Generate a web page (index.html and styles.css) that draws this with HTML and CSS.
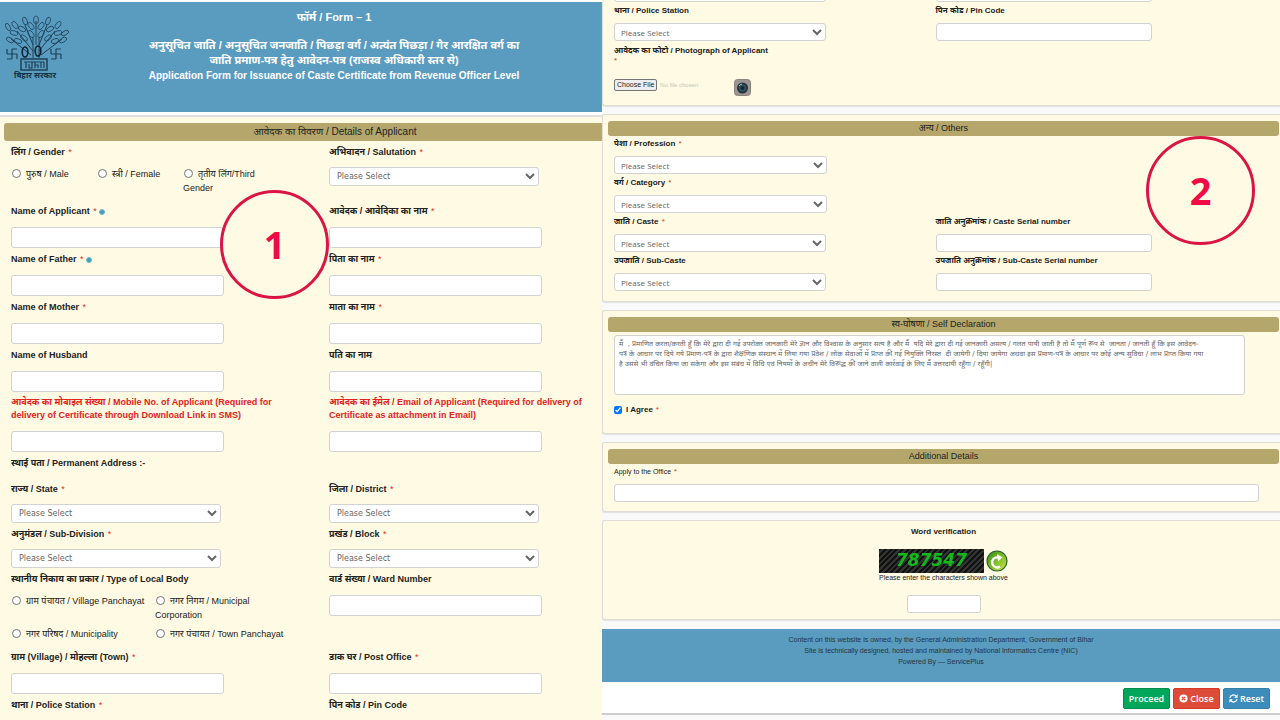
FILE: index.html
```html
<!DOCTYPE html>
<html lang="hi">

<head>
    <meta charset="UTF-8">
    <meta name="viewport" content="width=device-width, initial-scale=1.0">
    <title>Caste Certificate Application</title>
    <link rel="stylesheet" href="styles.css">
</head>

<body>
    <div class="page">

        <!-- Part 1 -->
        <div class="part part-one">
            <header class="form-header">
                <div class="emblem">
                    <svg viewBox="0 0 64 56" width="64" height="56" fill="none" stroke="#1d4258" stroke-width="1">
                        <path d="M28 43V22M34 43V22M31 30V6M28 36L12 16M34 36L50 16M28 30L20 10M34 30L42 10M26 40L6 24M36 40L57 24"/>
                        <g stroke-width="0.8">
                            <ellipse cx="31" cy="5" rx="2.5" ry="4"/>
                            <ellipse cx="26" cy="11" rx="2.2" ry="4" transform="rotate(-35 26 11)"/>
                            <ellipse cx="36" cy="11" rx="2.2" ry="4" transform="rotate(35 36 11)"/>
                            <ellipse cx="26" cy="19" rx="2.2" ry="4" transform="rotate(-35 26 19)"/>
                            <ellipse cx="36" cy="19" rx="2.2" ry="4" transform="rotate(35 36 19)"/>
                            <ellipse cx="20" cy="6" rx="2.2" ry="4" transform="rotate(-20 20 6)"/>
                            <ellipse cx="43" cy="6" rx="2.2" ry="4" transform="rotate(20 43 6)"/>
                            <ellipse cx="17" cy="14" rx="2.2" ry="4" transform="rotate(-60 17 14)"/>
                            <ellipse cx="45" cy="14" rx="2.2" ry="4" transform="rotate(60 45 14)"/>
                            <ellipse cx="10" cy="10" rx="2.2" ry="4" transform="rotate(-35 10 10)"/>
                            <ellipse cx="53" cy="10" rx="2.2" ry="4" transform="rotate(35 53 10)"/>
                            <ellipse cx="9" cy="18" rx="2.2" ry="4" transform="rotate(-75 9 18)"/>
                            <ellipse cx="53" cy="18" rx="2.2" ry="4" transform="rotate(75 53 18)"/>
                            <ellipse cx="3" cy="12" rx="2" ry="4" transform="rotate(-30 3 12)"/>
                            <ellipse cx="60" cy="18" rx="2" ry="4" transform="rotate(60 60 18)"/>
                            <ellipse cx="5" cy="25" rx="2.2" ry="4" transform="rotate(-60 5 25)"/>
                            <ellipse cx="58" cy="25" rx="2.2" ry="4" transform="rotate(60 58 25)"/>
                            <ellipse cx="13" cy="26" rx="2.2" ry="4" transform="rotate(-70 13 26)"/>
                            <ellipse cx="50" cy="26" rx="2.2" ry="4" transform="rotate(70 50 26)"/>
                            <ellipse cx="19" cy="23" rx="2.2" ry="4" transform="rotate(-50 19 23)"/>
                            <ellipse cx="43" cy="23" rx="2.2" ry="4" transform="rotate(50 43 23)"/>
                        </g>
                        <g stroke="#0c2230" stroke-width="1.6">
                            <ellipse cx="20" cy="37" rx="2.8" ry="5"/>
                            <ellipse cx="33" cy="36" rx="2.8" ry="5"/>
                        </g>
                        <path d="M7 34V44M2 39H12M7 34H12M12 39V44M7 44H2M2 39V34M51 34V44M46 39H56M51 34H56M56 39V44M51 44H46M46 39V34" stroke-width="1.2"/>
                        <rect x="16" y="44" width="26" height="11" stroke-width="1.5"/>
                        <path d="M19 47H39M21 47V53M24 49V53H27V47M30 47V53M30 50H33V53M36 47V53M39 47V53" stroke-width="1.2"/>
                    </svg>
                    <span>बिहार सरकार</span>
                </div>
                <div class="form-title">
                    <p class="form-number">फॉर्म / Form – 1</p>
                    <p>अनुसूचित जाति / अनुसूचित जनजाति / पिछड़ा वर्ग / अत्यंत पिछड़ा / गैर आरक्षित वर्ग का</p>
                    <p>जाति प्रमाण-पत्र हेतु आवेदन-पत्र (राजस्व अधिकारी स्तर से)</p>
                    <p class="english">Application Form for Issuance of Caste Certificate from Revenue Officer Level</p>
                </div>
            </header>

            <section class="applicant">
                <h2 class="bar">आवेदक का विवरण / Details of Applicant</h2>
                <div class="fields">
                    <div class="field">
                        <span class="label">लिंग / Gender <i>*</i></span>
                        <div class="radios radios-three">
                            <label><input type="radio" name="gender">पुरुष / Male</label>
                            <label><input type="radio" name="gender">स्त्री / Female</label>
                            <label><input type="radio" name="gender">तृतीय लिंग/Third Gender</label>
                        </div>
                    </div>
                    <div class="field">
                        <label for="salutation">अभिवादन / Salutation <i>*</i></label>
                        <select id="salutation"><option>Please Select</option></select>
                    </div>
                    <div class="field">
                        <label for="name">Name of Applicant <i>*</i><b class="help"></b></label>
                        <input type="text" id="name">
                    </div>
                    <div class="field">
                        <label for="name-hi">आवेदक / आवेदिका का नाम <i>*</i></label>
                        <input type="text" id="name-hi">
                    </div>
                    <div class="field">
                        <label for="father">Name of Father <i>*</i><b class="help"></b></label>
                        <input type="text" id="father">
                    </div>
                    <div class="field">
                        <label for="father-hi">पिता का नाम <i>*</i></label>
                        <input type="text" id="father-hi">
                    </div>
                    <div class="field">
                        <label for="mother">Name of Mother <i>*</i></label>
                        <input type="text" id="mother">
                    </div>
                    <div class="field">
                        <label for="mother-hi">माता का नाम <i>*</i></label>
                        <input type="text" id="mother-hi">
                    </div>
                    <div class="field">
                        <label for="husband">Name of Husband</label>
                        <input type="text" id="husband">
                    </div>
                    <div class="field">
                        <label for="husband-hi">पति का नाम</label>
                        <input type="text" id="husband-hi">
                    </div>
                    <div class="field red">
                        <label for="mobile">आवेदक का मोबाइल संख्या / Mobile No. of Applicant (Required for delivery of Certificate through Download Link in SMS)</label>
                        <input type="text" id="mobile">
                    </div>
                    <div class="field red">
                        <label for="email">आवेदक का ईमेल / Email of Applicant (Required for delivery of Certificate as attachment in Email)</label>
                        <input type="text" id="email">
                    </div>
                </div>

                <p class="address-title">स्थाई पता / Permanent Address :-</p>
                <div class="fields">
                    <div class="field">
                        <label for="state">राज्य / State <i>*</i></label>
                        <select id="state"><option>Please Select</option></select>
                    </div>
                    <div class="field">
                        <label for="district">जिला / District <i>*</i></label>
                        <select id="district"><option>Please Select</option></select>
                    </div>
                    <div class="field">
                        <label for="subdivision">अनुमंडल / Sub-Division <i>*</i></label>
                        <select id="subdivision"><option>Please Select</option></select>
                    </div>
                    <div class="field">
                        <label for="block">प्रखंड / Block <i>*</i></label>
                        <select id="block"><option>Please Select</option></select>
                    </div>
                    <div class="field">
                        <span class="label">स्थानीय निकाय का प्रकार / Type of Local Body</span>
                        <div class="radios radios-two">
                            <label><input type="radio" name="body">ग्राम पंचायत / Village Panchayat</label>
                            <label><input type="radio" name="body">नगर निगम / Municipal Corporation</label>
                            <label><input type="radio" name="body">नगर परिषद / Municipality</label>
                            <label><input type="radio" name="body">नगर पंचायत / Town Panchayat</label>
                        </div>
                    </div>
                    <div class="field">
                        <label for="ward">वार्ड संख्या / Ward Number</label>
                        <input type="text" id="ward">
                    </div>
                    <div class="field">
                        <label for="village">ग्राम (Village) / मोहल्ला (Town) <i>*</i></label>
                        <input type="text" id="village">
                    </div>
                    <div class="field">
                        <label for="post">डाक घर / Post Office <i>*</i></label>
                        <input type="text" id="post">
                    </div>
                    <div class="field">
                        <span class="label">थाना / Police Station <i>*</i></span>
                    </div>
                    <div class="field">
                        <span class="label">पिन कोड / Pin Code</span>
                    </div>
                </div>
            </section>
            <div class="step step-one">1</div>
        </div>

        <!-- Part 2 -->
        <div class="part part-two">
            <section class="card card-first">
                <div class="fields">
                    <div class="field">
                        <select aria-label="Village"><option></option></select>
                    </div>
                    <div class="field">
                        <input type="text" aria-label="Post Office">
                    </div>
                    <div class="field">
                        <label for="police">थाना / Police Station</label>
                        <select id="police"><option>Please Select</option></select>
                    </div>
                    <div class="field">
                        <label for="pin">पिन कोड / Pin Code</label>
                        <input type="text" id="pin">
                    </div>
                </div>
                <div class="photo">
                    <span class="label">आवेदक का फोटो / Photograph of Applicant</span>
                    <i>*</i>
                    <div class="file-row">
                        <button type="button" class="choose">Choose File</button>
                        <span class="no-file">No file chosen</span>
                        <button type="button" class="camera" aria-label="Camera">
                            <svg viewBox="0 0 17 17" width="17" height="17">
                                <rect x="0.5" y="0.5" width="16" height="16" rx="3" fill="#9b9690" stroke="#8a857f"/>
                                <circle cx="8.5" cy="9" r="5.5" fill="#25333d"/>
                                <circle cx="8.5" cy="9" r="3.5" fill="#34596a"/>
                                <circle cx="8.5" cy="9" r="2" fill="#142431"/>
                                <path d="M5 7A4 4 0 0 1 8 5" stroke="#a5bdc3" fill="none"/>
                            </svg>
                        </button>
                    </div>
                </div>
            </section>

            <section class="card">
                <h2 class="bar">अन्य / Others</h2>
                <div class="fields">
                    <div class="field whole">
                        <label for="profession">पेशा / Profession <i>*</i></label>
                        <select id="profession"><option>Please Select</option></select>
                    </div>
                    <div class="field whole">
                        <label for="category">वर्ग / Category <i>*</i></label>
                        <select id="category"><option>Please Select</option></select>
                    </div>
                    <div class="field">
                        <label for="caste">जाति / Caste <i>*</i></label>
                        <select id="caste"><option>Please Select</option></select>
                    </div>
                    <div class="field">
                        <label for="caste-no">जाति अनुक्रमांक / Caste Serial number</label>
                        <input type="text" id="caste-no">
                    </div>
                    <div class="field">
                        <label for="subcaste">उपजाति / Sub-Caste</label>
                        <select id="subcaste"><option>Please Select</option></select>
                    </div>
                    <div class="field">
                        <label for="subcaste-no">उपजाति अनुक्रमांक / Sub-Caste Serial number</label>
                        <input type="text" id="subcaste-no">
                    </div>
                </div>
            </section>

            <section class="card declaration">
                <h2 class="bar">स्व-घोषणा / Self Declaration</h2>
                <textarea aria-label="Self Declaration">मैं  , प्रमाणित करता/करती हूँ कि मेरे द्वारा दी गई उपरोक्त जानकारी मेरे ज्ञान और विश्वास के अनुसार सत्य है और मैं  यदि मेरे द्वारा दी गई जानकारी असत्य / गलत पायी जाती है तो मैं पूर्ण रूप से  जानता / जानती हूँ कि इस आवेदन-
पत्र के आधार पर दिये गये प्रमाण-पत्र के द्वारा शैक्षणिक संस्थान में लिया गया प्रवेश / लोक सेवाओं में प्राप्त की गई नियुक्ति निरस्त  दी जायेगी / दिया जायेगा अथवा इस प्रमाण-पत्र के आधार पर कोई अन्य सुविधा / लाभ प्राप्त किया गया
है उससे भी वंचित किया जा सकेगा और इस संबंध में विधि एवं नियमों के अधीन मेरे विरूद्ध की जाने वाली कार्रवाई के लिए मैं उत्तरदायी रहूँगा / रहूँगी|</textarea>
                <label class="agree"><input type="checkbox" checked>I Agree <i>*</i></label>
            </section>

            <section class="card additional">
                <h2 class="bar">Additional Details</h2>
                <div class="field">
                    <label for="office">Apply to the Office <i>*</i></label>
                    <input type="text" id="office">
                </div>
            </section>

            <section class="card verification">
                <h3>Word verification</h3>
                <div class="captcha-row">
                    <span class="captcha">787547</span>
                    <button type="button" class="refresh" aria-label="Refresh">
                        <svg viewBox="0 0 22 22" width="22" height="22">
                            <defs>
                                <linearGradient id="lime" x1="0" y1="0" x2="1" y2="1">
                                    <stop offset="0" stop-color="#2f8a1c"/>
                                    <stop offset="0.5" stop-color="#7fbd28"/>
                                    <stop offset="1" stop-color="#d3e84a"/>
                                </linearGradient>
                            </defs>
                            <circle cx="11" cy="11" r="10" fill="url(#lime)" stroke="#2b5f2b" stroke-width="1.2"/>
                            <path d="M14 16.5A5 5 0 1 1 12 7.5" fill="none" stroke="#fff" stroke-width="2.4"/>
                            <path d="M11 4L16.5 7.5L12 11.5Z" fill="#fff"/>
                        </svg>
                    </button>
                </div>
                <label for="captcha">Please enter the characters shown above</label>
                <input type="text" id="captcha">
            </section>

            <footer class="footer">
                <p>Content on this website is owned, by the General Administration Department, Government of Bihar</p>
                <p>Site is technically designed, hosted and maintained by National Informatics Centre (NIC)</p>
                <p>Powered By — ServicePlus</p>
            </footer>

            <div class="actions">
                <button type="button" class="btn green">Proceed</button>
                <button type="button" class="btn orange">
                    <svg viewBox="0 0 10 10" width="9" height="9">
                        <circle cx="5" cy="5" r="4.5" fill="#fff"/>
                        <path d="M3.2 3.2L6.8 6.8M6.8 3.2L3.2 6.8" stroke="#dd4b39" stroke-width="1.5"/>
                    </svg>Close</button>
                <button type="button" class="btn blue">
                    <svg viewBox="0 0 10 10" width="9" height="9" fill="none" stroke="#fff" stroke-width="1.4">
                        <path d="M1 4.2A4 4 0 0 1 8 2.6M9 5.8A4 4 0 0 1 2 7.4"/>
                        <path d="M9.6 0.4V4.2H5.8ZM0.4 9.6V5.8H4.2Z" fill="#fff" stroke="none"/>
                    </svg>Reset</button>
            </div>
            <div class="step step-two">2</div>
        </div>
    </div>
</body>

</html>
```
FILE: styles.css
```css
* {
    box-sizing: border-box;
}

body {
    font-family: "Liberation Sans", "Noto Sans", "Noto Sans Devanagari", sans-serif;
    background-color: #fff;
    color: #222;
    margin: 0;
}

h2,
h3,
p {
    margin: 0;
}

i {
    color: #e0321c;
    font-style: normal;
}

.page {
    display: grid;
    grid-template-columns: 602fr 678fr;
    height: 100vh;
    overflow: hidden;
}

.part {
    position: relative;
    min-width: 0;
}

.part-one {
    font-size: 9px;
    line-height: 14px;
    padding-top: 2px;
}

.part-two {
    font-size: 8px;
    line-height: 12px;
    background-color: #f9f9fa;
}

/* Header */
.form-header {
    display: flex;
    height: 110px;
    padding: 8px 2px;
    background-color: #5a9bc0;
}

.emblem {
    display: flex;
    flex-direction: column;
    align-items: center;
    width: 66px;
    padding-top: 5px;
    font-size: 8px;
    line-height: 9px;
    font-weight: bold;
    color: #123247;
}

.emblem svg {
    flex-shrink: 0;
    margin-left: 4px;
}

.form-title {
    flex: 1;
    color: #fff;
    font-size: 11px;
    line-height: 15px;
    font-weight: bold;
    text-align: center;
    white-space: nowrap;
}

.form-title .form-number {
    margin-bottom: 13px;
}

.form-title .english {
    font-size: 10px;
}

/* Sections */
.applicant {
    margin-top: 3px;
    padding: 6px 0 0 4px;
    border-top: 2px solid #e2e3e1;
    background-color: #fffae3;
    height: 100%;
}

.bar {
    background-color: #b5a76c;
    border-radius: 3px;
    color: #222;
    font-weight: normal;
    text-align: center;
}

.part-one .bar {
    border-radius: 3px 0 0 3px;
    font-size: 10px;
    line-height: 18px;
    padding-left: 64px;
    margin-bottom: 4px;
}

.part-two .bar {
    font-size: 9px;
    line-height: 15px;
    margin-bottom: 2px;
}

.fields {
    display: grid;
}

.part-one .fields {
    grid-template-columns: 318fr 273fr;
    row-gap: 4px;
    padding-left: 7px;
}

.part-two .fields {
    grid-template-columns: 322fr 344fr;
    row-gap: 4px;
    padding-left: 6px;
}

.field > label,
.label,
.address-title {
    display: block;
    font-weight: bold;
}

.red label {
    color: #e32219;
    line-height: 13px;
    max-width: 275px;
}

.field i {
    margin-left: 1px;
    font-weight: normal;
}

.address-title {
    margin: 4px 0 12px 7px;
}

.help {
    display: inline-block;
    width: 6px;
    height: 6px;
    margin-left: 2px;
    border-radius: 50%;
    background-color: #3f9fc0;
    border: 1px solid #7cb6c6;
    vertical-align: -1px;
}

input[type="text"],
select,
textarea {
    display: block;
    background-color: #fff;
    border: 1px solid #d2d2d0;
    border-radius: 3px;
    margin: 0;
}

select {
    color: #666;
    font-family: "DejaVu Sans", sans-serif;
    font-size: 8px;
    padding: 0 3px;
}

.part-two select {
    font-family: "Open Sans", sans-serif;
    padding: 0 2px;
}

.part-one .field > input {
    margin-top: 9px;
    height: 21px;
    width: 67%;
}

.part-one .field:nth-child(even) > input {
    width: 78%;
}

.part-one select {
    margin-top: 8px;
    height: 19px;
    width: 66%;
}

.part-one .field:nth-child(even) > select {
    width: 77%;
}

.part-two .field > input,
.part-two select {
    margin-top: 6px;
    margin-bottom: -1px;
    height: 18px;
    width: 66%;
}

.part-two .fields .field > input {
    width: 63%;
}

.part-two .whole {
    grid-column: 1 / -1;
}

.part-two .whole > select {
    width: 32%;
}

/* Radio buttons */
.radios {
    display: grid;
    row-gap: 5px;
    margin-top: 8px;
    padding-bottom: 5px;
}

.radios-three {
    grid-template-columns: 86px 86px 80px;
}

.radios-two {
    grid-template-columns: 144px 140px;
}

.radios input {
    width: 9px;
    height: 9px;
    margin: 0 5px 0 1px;
    vertical-align: -1px;
}

/* Cards on the right side */
.card {
    background-color: #fffae3;
    border: 1px solid #dddcd6;
    border-right: none;
    border-radius: 3px 0 0 3px;
    padding: 6px 1px 11px 5px;
    margin-bottom: 8px;
    box-shadow: 0 1px 1px #e2e2e2;
}

.card-first {
    border-top: none;
    padding-top: 5px;
    padding-bottom: 9px;
}

/* the row above is scrolled out of view */
.card-first .fields {
    margin-top: -27px;
}

.photo {
    padding: 5px 0 0 6px;
}

.photo > i {
    display: block;
    line-height: 8px;
}

.file-row {
    display: flex;
    align-items: flex-start;
    padding-top: 14px;
}

.choose {
    font-size: 7px;
    line-height: 10px;
    padding: 0 2px;
    border: 1px solid #767676;
    border-radius: 2px;
    background-color: #efefef;
    color: #222;
}

.no-file {
    color: #c8c5b5;
    font-size: 6px;
    margin-left: 3px;
}

.camera {
    border: none;
    padding: 0;
    background: none;
    margin-left: 36px;
    height: 17px;
}

.declaration textarea {
    width: 94%;
    height: 60px;
    margin: 3px 0 0 6px;
    padding: 3px 4px;
    resize: none;
    overflow: hidden;
    white-space: pre;
    color: #666;
    font-family: "DejaVu Sans", "Noto Sans", "Noto Sans Devanagari", sans-serif;
    font-size: 7px;
    line-height: 10px;
}

.agree {
    display: flex;
    align-items: center;
    padding: 9px 0 6px 6px;
    font-weight: bold;
}

.agree input {
    width: 8px;
    height: 8px;
    margin: 0 4px 0 0;
}

.agree i {
    margin-left: 3px;
    font-weight: normal;
}

.additional {
    padding-bottom: 10px;
}

.additional .field {
    padding-left: 6px;
}

.additional .field > label {
    font-size: 7px;
    font-weight: normal;
}

.part-two .additional .field > input {
    width: 97%;
}

.verification {
    display: flex;
    flex-direction: column;
    align-items: center;
    padding-top: 5px;
    padding-bottom: 6px;
    margin-bottom: 9px;
}

.verification h3 {
    font-size: 8px;
    line-height: 12px;
    color: #222;
}

.captcha-row {
    display: flex;
    gap: 2px;
    margin-top: 11px;
}

.captcha {
    width: 105px;
    height: 24px;
    background: repeating-linear-gradient(135deg, #111 0, #111 2px, #333 2px, #333 4px);
    color: #12b91d;
    font-family: "DejaVu Sans", sans-serif;
    font-size: 17px;
    line-height: 22px;
    font-style: italic;
    font-weight: bold;
    text-align: center;
}

.refresh {
    border: none;
    background: none;
    padding: 0;
    margin-top: 1px;
    height: 22px;
}

.verification label {
    font-size: 7px;
    line-height: 9px;
}

.verification input[type="text"] {
    width: 74px;
    height: 18px;
    margin-top: 13px;
}

/* Footer */
.footer {
    background-color: #5a9bc0;
    color: #24353f;
    font-size: 7px;
    line-height: 11px;
    text-align: center;
    padding: 5px 0 15px;
}

.actions {
    display: flex;
    justify-content: flex-end;
    gap: 3px;
    padding: 6px 10px 4px;
    background-color: #fff;
    border-bottom: 2px solid #ccc;
}

.btn {
    display: flex;
    align-items: center;
    justify-content: center;
    gap: 2px;
    min-width: 47px;
    height: 21px;
    padding: 0;
    border: 1px solid;
    border-radius: 2px;
    color: #fff;
    font-family: "Open Sans", sans-serif;
    font-size: 9px;
    font-weight: 600;
}

.green {
    background-color: #00a65a;
    border-color: #008d4c;
}

.orange {
    background-color: #dd4b39;
    border-color: #d73925;
}

.blue {
    background-color: #3c8dbc;
    border-color: #367fa9;
}

/* Step circles drawn over the form */
.step {
    position: absolute;
    display: flex;
    align-items: center;
    justify-content: center;
    width: 109px;
    height: 109px;
    padding-bottom: 2px;
    border: 3px solid #dc1444;
    border-radius: 50%;
    background-color: #fffae3;
    color: #f00a46;
    font-family: "Open Sans", sans-serif;
    font-size: 38px;
    font-weight: bold;
}

.step-one {
    top: 190px;
    left: 220px;
}

.step-two {
    top: 136px;
    right: 25px;
}
```
